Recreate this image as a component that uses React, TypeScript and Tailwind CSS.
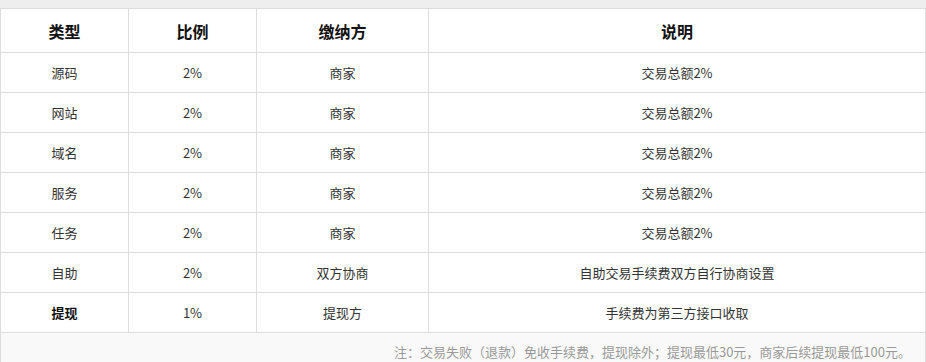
const rows = [
  { type: "源码", rate: "2%", payer: "商家", note: "交易总额2%" },
  { type: "网站", rate: "2%", payer: "商家", note: "交易总额2%" },
  { type: "域名", rate: "2%", payer: "商家", note: "交易总额2%" },
  { type: "服务", rate: "2%", payer: "商家", note: "交易总额2%" },
  { type: "任务", rate: "2%", payer: "商家", note: "交易总额2%" },
  { type: "自助", rate: "2%", payer: "双方协商", note: "自助交易手续费双方自行协商设置" },
  { type: "提现", rate: "1%", payer: "提现方", note: "手续费为第三方接口收取", bold: true },
];

const font = { fontFamily: '"Noto Sans CJK SC", "Liberation Sans", sans-serif' };

export default function App() {
  return (
    <div className="w-[926px] h-[362px] overflow-hidden bg-[#eeeeee] pt-2" style={font}>
      <div className="border-l border-t border-[#dddddd] bg-white">
        {/* 表头 */}
        <div className="grid grid-cols-[128px_128px_172px_1fr]">
          {["类型", "比例", "缴纳方", "说明"].map((h) => (
            <div
              key={h}
              className="h-[44px] flex items-center justify-center border-r border-b border-[#dddddd] text-[16px] font-bold text-[#111]"
            >
              {h}
            </div>
          ))}
        </div>

        {rows.map((r) => (
          <div key={r.type} className="grid grid-cols-[128px_128px_172px_1fr] text-[13px] text-[#333]">
            <div className={`h-[40px] flex items-center justify-center border-r border-b border-[#dddddd] ${r.bold ? "font-bold text-[#111]" : ""}`}>
              {r.type}
            </div>
            <div className="h-[40px] flex items-center justify-center border-r border-b border-[#dddddd]">{r.rate}</div>
            <div className="h-[40px] flex items-center justify-center border-r border-b border-[#dddddd]">{r.payer}</div>
            <div className="h-[40px] flex items-center justify-center border-r border-b border-[#dddddd]">{r.note}</div>
          </div>
        ))}

        {/* 底部说明 */}
        <div className="h-[38px] bg-[#f9f9f9] border-r border-[#dddddd] flex items-center justify-end pr-[14px] text-[13px] text-[#999]">
          注：交易失败（退款）免收手续费，提现除外；提现最低30元，商家后续提现最低100元。
        </div>
      </div>
    </div>
  );
}
